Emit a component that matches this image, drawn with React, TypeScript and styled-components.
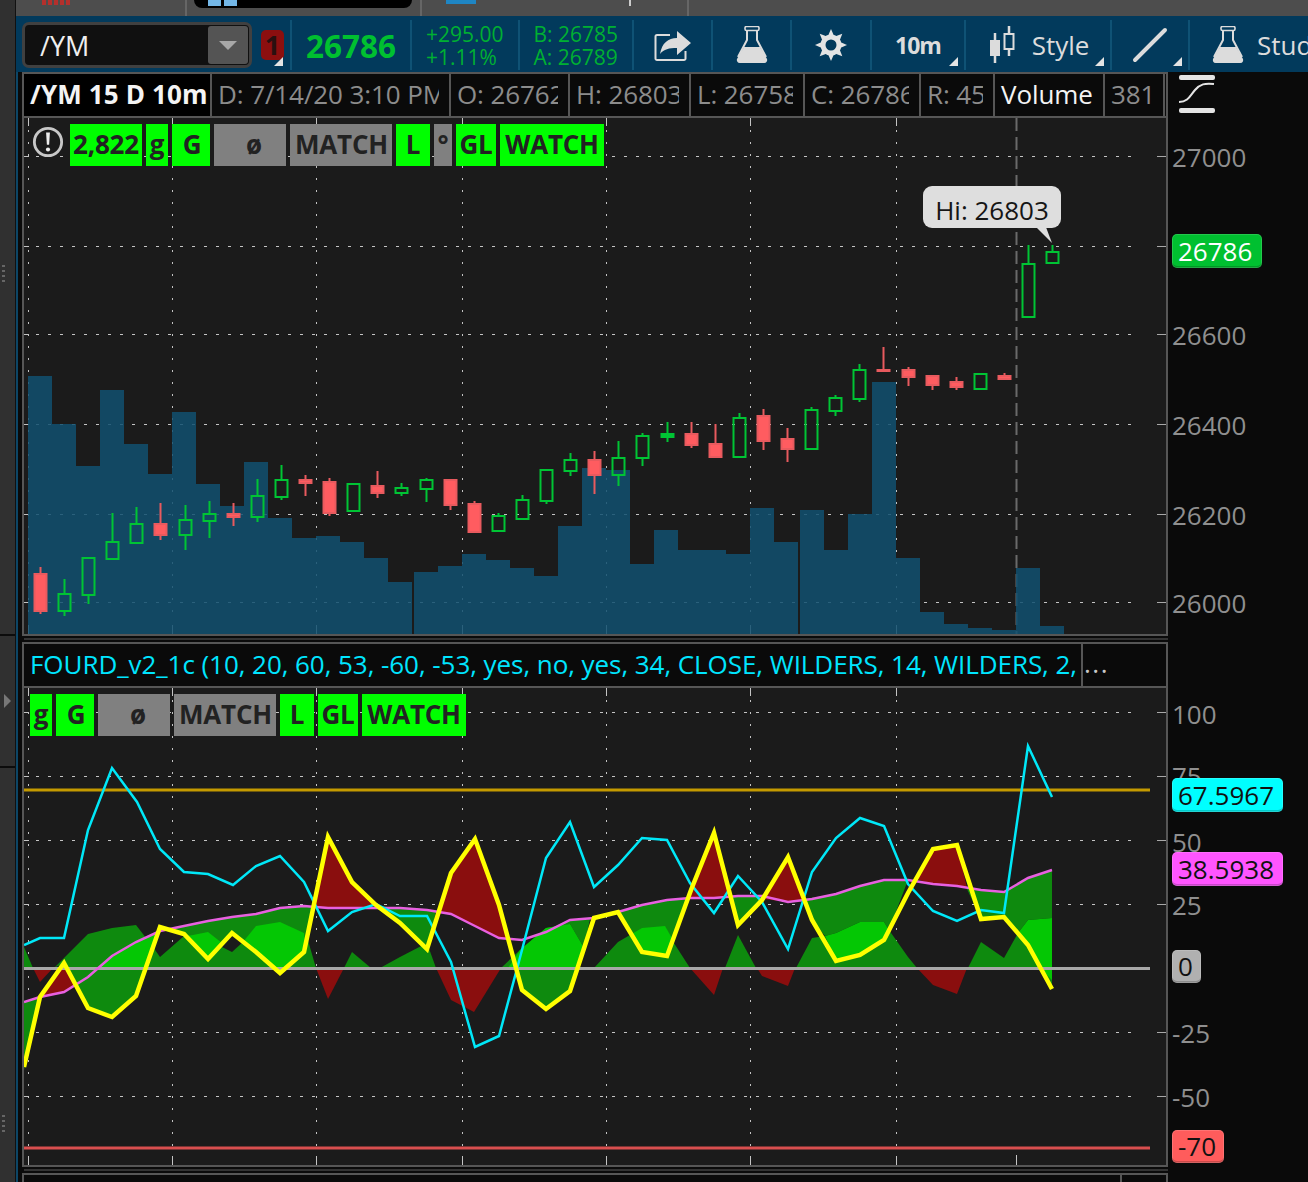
import React from "react";
import styled, { createGlobalStyle } from "styled-components";

const FONT = `"Open Sans", "Noto Sans", sans-serif`;

const GlobalStyle = createGlobalStyle`
  html, body {
    margin: 0;
    padding: 0;
    background: #0a0a0a;
    font-family: ${FONT};
  }
`;

// all chart data is in page pixels, svg viewBoxes are offset to match
const stepX = 24.1;
const candleX = (i: number) => 40.4 + stepX * i;

// [wickTop, wickBottom, bodyTop, bodyBottom, up]
const candles: [number, number, number, number, boolean][] = [
  [567, 614, 574, 611, false], [579, 616, 594, 611, true], [557, 604, 558, 595, true],
  [513, 559, 542, 559, true], [507, 543, 524, 543, true], [503, 540, 524, 535, false],
  [505, 550, 520, 535, true], [501, 538, 514, 521, true], [503, 526, 514, 517, false],
  [479, 522, 496, 517, true], [465, 500, 480, 497, true], [475, 496, 480, 483, false],
  [478, 516, 482, 513, false], [483, 512, 484, 511, true], [471, 498, 486, 493, false],
  [483, 496, 488, 493, true], [478, 502, 480, 489, true], [480, 510, 480, 505, false],
  [501, 532, 504, 532, false], [513, 532, 516, 531, true], [495, 519, 500, 519, true],
  [470, 504, 470, 501, true], [453, 476, 460, 471, true], [451, 494, 460, 475, false],
  [441, 486, 458, 475, true], [433, 466, 436, 458, true], [422, 442, 434, 437, true],
  [422, 448, 434, 445, false], [424, 457, 444, 457, false], [413, 458, 418, 457, true],
  [409, 450, 416, 441, false], [428, 462, 439, 449, false], [407, 450, 410, 449, true],
  [395, 416, 398, 411, true], [364, 402, 370, 399, true], [347, 371, 370, 371, false],
  [367, 386, 370, 377, false], [375, 390, 376, 385, false], [377, 390, 382, 387, false],
  [374, 389, 374, 389, true], [373, 380, 376, 379, false], [245, 318, 264, 317, true],
  [245, 263, 252, 263, true],
];

// [left, right, top]
const volumeBars: [number, number, number][] = [
  [28, 52, 376], [52, 76, 424], [76, 100, 466], [100, 124, 390], [124, 148, 444], [148, 172, 474],
  [172, 196, 412], [196, 220, 484], [220, 244, 506], [244, 268, 462], [268, 292, 518], [292, 316, 538],
  [316, 340, 536], [340, 364, 542], [364, 388, 558], [388, 412, 582], [414, 438, 572], [438, 462, 566],
  [462, 486, 554], [486, 510, 560], [510, 534, 568], [534, 558, 576], [558, 582, 526], [582, 606, 468],
  [606, 630, 470], [630, 654, 564], [654, 678, 530], [678, 702, 550], [702, 726, 550], [726, 750, 554],
  [750, 774, 508], [774, 798, 542], [800, 824, 510], [824, 848, 550], [848, 872, 514], [872, 896, 382],
  [896, 920, 558], [920, 944, 612], [944, 968, 624], [968, 992, 628], [992, 1016, 630], [1016, 1040, 568],
  [1040, 1064, 626],
];

const gridX = [28, 172, 316, 462, 606, 750, 896];

const cyanLine =
  "24,945 40,938 64,938 88,830 112,768 137,802 160,849 184,872 208,874 233,885 256,866 280,856 304,882 328,931 352,912 376,904 400,916 427,916 451,962 475,1047 499,1036 522,950 546,858 570,822 594,887 618,865 642,838 667,840 690,883 714,913 738,876 762,902 788,949 812,872 836,838 860,818 884,826 908,884 933,911 957,921 981,910 1004,913 1028,746 1052,797";
const yellowLine =
  "24,1067 40,997 64,963 88,1008 112,1017 136,996 160,927 184,934 208,959 232,933 256,952 280,973 304,952 328,837 352,882 376,905 400,923 427,949 451,873 475,839 499,905 522,990 546,1009 570,991 594,918 618,912 642,952 667,956 691,890 714,833 738,925 762,900 788,857 812,920 836,961 860,955 884,940 908,893 933,849 957,845 981,919 1004,917 1028,945 1052,989";
const magentaLine =
  "24,1002 40,997 64,992 88,977 112,956 136,942 160,931 184,926 208,921 232,917 256,914 280,908 304,906 328,908 352,908 376,908 400,908 427,910 451,914 475,926 499,938 522,940 546,932 570,920 594,918 618,912 642,905 667,900 690,898 714,898 738,896 762,896 788,902 812,899 836,894 860,886 884,880 908,880 933,884 957,886 981,890 1004,892 1028,878 1052,870";

const darkGreen = [
  "24,947 33,968 24,968",
  "24,1002 41,997 24,1070",
  "54,968 64,958 88,934 112,928 136,925 153,947 136,996 112,1017 88,1008 64,963",
  "165,929 184,926 208,921 232,917 256,914 280,908 304,906 313,907 304,952 280,973 256,952 232,933 208,959 184,934",
  "148,968 153,947 160,957 184,936 208,959 220,946 232,952 243,942 256,952 280,973 304,952 307,937 316,968",
  "344,968 352,952 371,968",
  "376,906 436,911 428,948",
  "380,968 400,957 427,943 436,968",
  "516,968 522,990 546,1009 570,991 577,968",
  "501,968 520,950 546,928 570,924 584,948 577,968",
  "546,930 570,920 590,919 584,948 570,924",
  "594,968 618,942 630,935 642,952 667,956 672,940 690,968",
  "618,912 642,905 667,900 687,899 667,956 642,952",
  "729,896 762,896 763,900 738,925",
  "725,968 738,935 756,968",
  "796,968 812,938 825,936 836,961 860,955 884,940 889,930 908,957 917,968",
  "804,899 836,894 860,886 884,880 908,880 889,930 884,922 860,922 836,933 825,936 812,920",
  "968,968 981,942 1004,958 1018,933 1028,945 1040,968",
  "967,889 981,890 1004,892 1028,878 1052,870 1052,918 1028,920 1018,933 1004,917 981,919",
  "1042,968 1052,968 1052,986",
];
const brightGreen = [
  "98,968 112,956 136,942 158,932 146,968",
  "187,936 193,935 208,932 222,943 208,959",
  "243,942 256,926 280,922 304,933 306,950 304,952 280,973 256,952",
  "508,968 520,950 546,928 570,924 584,948 577,968",
  "630,935 642,928 665,926 673,940 667,956 642,952",
  "825,936 836,933 860,922 884,922 889,930 884,940 860,955 836,961",
  "1018,933 1028,920 1052,918 1052,980 1040,968 1028,945",
];
const darkRed = [
  "33,968 40,982 53,968",
  "41,997 64,963 76,985 64,992",
  "316,968 328,999 344,968",
  "313,907 328,837 352,882 376,906 352,908 328,908",
  "439,912 451,873 475,839 499,905 508,939 499,938 475,926 451,914",
  "436,968 451,1000 474,1012 501,968",
  "690,968 714,995 723,968",
  "688,898 714,833 729,896 714,898",
  "757,968 762,976 788,986 795,968",
  "763,899 788,857 804,899 788,902",
  "917,968 933,985 957,994 967,968",
  "916,879 933,849 957,845 967,888 957,886 933,884",
];

const Page = styled.div`
  width: 1308px;
  height: 1182px;
  display: flex;
  overflow: hidden;
  background: #0a0a0a;
  color: #8c8c8c;
`;

const Rail = styled.div`
  width: 15px;
  flex: none;
  background: #303030;
  border-right: 1px solid #111;
  display: flex;
  flex-direction: column;
`;

const RailSlot = styled.div<{ $h: number }>`
  height: ${(p) => p.$h}px;
  flex: none;
  box-sizing: border-box;
  border-bottom: 2px solid #0c0c0c;
`;

const ArrowSlot = styled(RailSlot)`
  display: flex;
  align-items: center;
  justify-content: center;
  &::after {
    content: "";
    border-top: 7px solid transparent;
    border-bottom: 7px solid transparent;
    border-left: 7px solid #777;
  }
`;

const Grip = styled.div<{ $top: number }>`
  width: 3px;
  height: 20px;
  margin: ${(p) => p.$top}px 0 0 2px;
  background: repeating-linear-gradient(to bottom, #666 0 2px, transparent 2px 5px);
`;

const Main = styled.div`
  flex: 1;
  min-width: 0;
  display: flex;
  flex-direction: column;
`;

const TabStrip = styled.div`
  height: 16px;
  flex: none;
  display: flex;
  background: #4d4d4d;
`;

const Tab = styled.div<{ $w: number }>`
  width: ${(p) => p.$w}px;
  flex: none;
  height: 100%;
  border-right: 2px solid #666;
  display: flex;
  align-items: flex-start;
`;

const ActivePill = styled.div`
  width: 218px;
  height: 8px;
  margin-left: 7px;
  background: #000;
  border-radius: 0 0 8px 8px;
  display: flex;
  gap: 3px;
  padding-left: 14px;
  box-sizing: border-box;
`;

const PillTile = styled.div`
  width: 13px;
  height: 6px;
  background: #74b8e8;
`;

const RedBars = styled.div`
  margin-left: 26px;
  width: 30px;
  height: 5px;
  background: repeating-linear-gradient(to right, #b5302c 0 4px, transparent 4px 6px);
`;

const BlueTile = styled.div`
  width: 30px;
  height: 4px;
  margin-left: 24px;
  background: #1f86c4;
`;

const WhiteTick = styled.div`
  width: 2px;
  height: 6px;
  margin-left: 153px;
  background: #ccc;
`;

const Toolbar = styled.div`
  height: 56px;
  flex: none;
  box-sizing: border-box;
  padding: 4px 0 2px;
  display: flex;
  background: #023a5c;
`;

const Section = styled.div<{ $w?: number }>`
  ${(p) => (p.$w ? `width: ${p.$w}px; flex: none;` : "flex: 1; min-width: 0;")}
  box-sizing: border-box;
  height: 50px;
  position: relative;
  display: flex;
  align-items: center;
  justify-content: center;
  gap: 15px;
  border-right: 2px solid #0f5275;
  & > svg {
    flex: none;
  }
  &:last-child {
    border-right: 0;
    justify-content: flex-start;
    padding-left: 22px;
    gap: 13px;
    white-space: nowrap;
    overflow: hidden;
  }
`;

const StyleSection = styled(Section)`
  padding-left: 2px;
`;

const SymbolSection = styled(Section)`
  justify-content: flex-start;
  gap: 9px;
  padding-left: 6px;
`;

const SymbolBox = styled.div`
  width: 230px;
  height: 46px;
  box-sizing: border-box;
  background: #101010;
  border: 3px solid #404040;
  border-radius: 7px;
  color: #f0f0f0;
  font-size: 27px;
  display: flex;
  align-items: center;
  justify-content: space-between;
  padding: 0 1px 0 15px;
`;

const DropButton = styled.div`
  width: 40px;
  height: 38px;
  background: #545454;
  border-radius: 3px;
  display: flex;
  align-items: center;
  justify-content: center;
  &::after {
    content: "";
    border-left: 9px solid transparent;
    border-right: 9px solid transparent;
    border-top: 9px solid #a8a8a8;
  }
`;

const AlertFlag = styled.div`
  width: 23px;
  height: 30px;
  background: #8c0f0f;
  border-radius: 5px;
  color: #2a1010;
  font-size: 27px;
  font-weight: 700;
  line-height: 30px;
  text-align: center;
`;

const Corner = styled.div<{ $right: number }>`
  position: absolute;
  right: ${(p) => p.$right}px;
  bottom: 4px;
  width: 0;
  height: 0;
  border-left: 9px solid transparent;
  border-bottom: 9px solid #e4e4e4;
`;

const LastPrice = styled.div`
  color: #00c030;
  font-size: 31.5px;
  font-weight: 700;
`;

const QuoteStack = styled.div<{ $w: number }>`
  color: #00b032;
  font-size: 21px;
  line-height: 23px;
  padding-top: 2px;
  white-space: nowrap;
  width: ${(p) => p.$w}px;
`;

const ToolText = styled.span<{ $bold?: boolean }>`
  color: #dcdcdc;
  font-size: ${(p) => (p.$bold ? 23 : 26)}px;
  font-weight: ${(p) => (p.$bold ? 700 : 400)};
  letter-spacing: ${(p) => (p.$bold ? "-1px" : "0")};
`;

const ChartStack = styled.div`
  flex: 1;
  min-height: 0;
  display: flex;
  flex-direction: column;
  box-sizing: border-box;
  border-left: 2px solid #0d4666;
  padding-left: 4px;
`;

const ChartRow = styled.div<{ $h: number }>`
  height: ${(p) => p.$h}px;
  flex: none;
  display: flex;
`;

const PlotFrame = styled.div`
  width: 1146px;
  flex: none;
  box-sizing: border-box;
  border: 2px solid #565656;
  display: flex;
  flex-direction: column;
  overflow: hidden;
`;

const PaneHeader = styled.div`
  height: 44px;
  flex: none;
  box-sizing: border-box;
  display: flex;
  background: #0a0a0a;
  border-bottom: 2px solid #565656;
`;

const Cell = styled.div<{ $w: number; $bright?: boolean; $title?: boolean }>`
  width: ${(p) => p.$w}px;
  flex: none;
  box-sizing: border-box;
  padding: 0 ${(p) => (p.$title ? 0 : 10)}px 0 6px;
  border-right: 2px solid #565656;
  background: ${(p) => (p.$title ? "#000" : "transparent")};
  color: ${(p) => (p.$bright || p.$title ? "#f4f4f4" : "#8c8c8c")};
  font-size: 26px;
  font-weight: ${(p) => (p.$title ? 700 : 400)};
  letter-spacing: ${(p) => (p.$title ? "0.15px" : "-0.1px")};
  line-height: 40px;
  white-space: nowrap;
`;

const CellClip = styled.div`
  overflow: hidden;
  white-space: nowrap;
`;

const StudyTitle = styled.div`
  color: #00e5ff;
  font-size: 26px;
  line-height: 40px;
  white-space: nowrap;
  overflow: hidden;
  margin-right: -8px;
  letter-spacing: -0.06px;
`;

const MoreDots = styled.div`
  color: #c8c8c8;
  font-size: 26px;
  line-height: 38px;
  padding-left: 1px;
  letter-spacing: 1.5px;
`;

const Plot = styled.div`
  flex: 1;
  min-height: 0;
  position: relative;
  background: #1b1b1b;
`;

const ChartSvg = styled.svg`
  display: block;
  width: 100%;
  height: 100%;
`;

const StudyFlags = styled.div<{ $left: number; $top: number }>`
  position: absolute;
  left: ${(p) => p.$left}px;
  top: ${(p) => p.$top}px;
  display: flex;
  align-items: center;
  gap: 4px;
`;

const Flag = styled.div<{ $w: number; $off?: boolean; $start?: boolean; $nudge?: number }>`
  width: ${(p) => p.$w}px;
  height: 42px;
  flex: none;
  box-sizing: border-box;
  background: ${(p) => (p.$off ? "#808080" : "#00ff00")};
  color: #222;
  font-size: 26px;
  font-weight: 700;
  line-height: 40px;
  overflow: hidden;
  white-space: nowrap;
  padding-left: ${(p) => (p.$start ? 5 : p.$nudge ?? 0)}px;
  text-align: ${(p) => (p.$start ? "left" : "center")};
  letter-spacing: -0.2px;
`;

const AlertIcon = styled.svg`
  width: 32px;
  height: 32px;
  margin: 0 2px 6px 0;
  flex: none;
`;

const Tooltip = styled.div`
  position: absolute;
  left: 899px;
  top: 68px;
  width: 138px;
  height: 42px;
  background: #dedede;
  border-radius: 9px;
  color: #151515;
  font-size: 26px;
  line-height: 48px;
  text-align: center;
  &::after {
    content: "";
    position: absolute;
    left: 113px;
    top: 41px;
    width: 16px;
    height: 16px;
    background: #dedede;
    clip-path: polygon(0 0, 62% 0, 100% 100%);
  }
`;

const Axis = styled.div`
  flex: 1;
  position: relative;
  background: #0a0a0a;
  overflow: hidden;
`;

const AxisLabel = styled.div<{ $y: number }>`
  position: absolute;
  left: 4px;
  top: ${(p) => p.$y - 20}px;
  font-size: 26px;
  line-height: 40px;
  color: #8f8f8f;
`;

const AxisBadge = styled.div<{ $y: number; $h: number; $w: number; $bg: string; $light?: boolean }>`
  position: absolute;
  left: 4px;
  top: ${(p) => p.$y}px;
  width: ${(p) => p.$w}px;
  height: ${(p) => p.$h}px;
  padding-left: 6px;
  box-sizing: border-box;
  border-radius: 5px;
  background: ${(p) => p.$bg};
  box-shadow: inset 0 0 0 1px rgba(255, 255, 255, 0.14), inset 0 -2px 0 rgba(0, 0, 0, 0.2);
  color: ${(p) => (p.$light ? "#fff" : "#111")};
  font-size: 26px;
  line-height: ${(p) => p.$h}px;
  white-space: nowrap;
`;

const StudyIcon = styled.svg`
  position: absolute;
  left: 10px;
  top: 3px;
  width: 38px;
  height: 38px;
`;

const PaneGap = styled.div`
  height: 6px;
  flex: none;
  width: 1146px;
  display: flex;
  align-items: center;
  &::after {
    content: "";
    display: block;
    width: 100%;
    height: 2px;
    margin-left: 2px;
    background: #333;
  }
`;

const NextPane = styled.div`
  flex: 1;
  width: 1146px;
  box-sizing: border-box;
  border: 2px solid #565656;
  border-bottom: 0;
  background: #0a0a0a;
  display: flex;
  justify-content: flex-end;
`;

const NextPaneCell = styled.div`
  width: 44px;
  border-left: 2px solid #565656;
`;

const ShareIcon = () => (
  <svg width="38" height="32" viewBox="0 0 38 32" fill="none">
    <path d="M16 6H3a1.5 1.5 0 0 0-1.5 1.5v22A1.5 1.5 0 0 0 3 31h27a1.5 1.5 0 0 0 1.5-1.5V22" stroke="#dcdcdc" strokeWidth="2" />
    <path d="M6 25C8 14 14 9 23 9V2l14 12-14 12v-7c-8 0-13 1-17 6z" fill="#dcdcdc" />
  </svg>
);

const FlaskIcon = () => (
  <svg width="32" height="38" viewBox="0 0 32 38">
    <rect x="9" y="0.5" width="14" height="4" rx="1.5" fill="none" stroke="#dcdcdc" strokeWidth="1.6" />
    <path d="M11 5v9L2 31" fill="none" stroke="#dcdcdc" strokeWidth="2" />
    <path d="M21 5v9l9 17" fill="none" stroke="#dcdcdc" strokeWidth="2" />
    <path d="M8 21h16l7 12c.6 2-.5 4-2.500 4H3.500C1.500 37 .4 35 1 33z" fill="#dcdcdc" />
  </svg>
);

const GearIcon = () => (
  <svg width="32" height="34" viewBox="-16 -17 32 34">
    {[0, 45, 90, 135, 180, 225, 270, 315].map((a) => (
      <path key={a} d="M-3.500 -8 L0 -16 L3.500 -8z" fill="#e4e4e4" transform={`rotate(${a})`} />
    ))}
    <circle r="8" fill="none" stroke="#e4e4e4" strokeWidth="5" />
  </svg>
);

const CandleStyleIcon = () => (
  <svg width="28" height="40" viewBox="0 0 28 40" fill="none">
    <path d="M6 8v30M20 1v30" stroke="#dcdcdc" strokeWidth="2.500" />
    <rect x="1" y="15" width="10" height="16" fill="#dcdcdc" />
    <rect x="15.500" y="9" width="9" height="15" fill="#023a5c" stroke="#dcdcdc" strokeWidth="2" />
  </svg>
);

const LineToolIcon = () => (
  <svg width="36" height="36" viewBox="0 0 36 36">
    <path d="M3 33 33 3" stroke="#dcdcdc" strokeWidth="4" strokeLinecap="round" />
  </svg>
);

const Grid = ({ x0, x1, ys, top, bottom }: { x0: number; x1: number; ys: number[]; top: number; bottom: number }) => (
  <g shapeRendering="crispEdges">
    {ys.map((y) => (
      <g key={y}>
        <line x1={36} x2={x1} y1={y + 0.5} y2={y + 0.5} stroke="#c4c4c4" strokeDasharray="3 9" />
        <line x1={x0} x2={x0 + 5} y1={y + 0.5} y2={y + 0.5} stroke="#c4c4c4" />
        <line x1={1157} x2={1166} y1={y + 0.5} y2={y + 0.5} stroke="#a8a8a8" />
      </g>
    ))}
    {gridX.map((x) => (
      <g key={x}>
        <line x1={x + 0.5} x2={x + 0.5} y1={top + 12} y2={bottom - 12} stroke="#c4c4c4" strokeDasharray="2 10" />
        <line x1={x + 0.5} x2={x + 0.5} y1={top} y2={top + 8} stroke="#c4c4c4" />
        <line x1={x + 0.5} x2={x + 0.5} y1={bottom - 9} y2={bottom} stroke="#c4c4c4" />
      </g>
    ))}
  </g>
);

const PriceChart = () => (
  <ChartSvg viewBox="24 118 1142 516" preserveAspectRatio="none">
    <Grid x0={24} x1={1140} ys={[156, 246, 334, 424, 514, 602]} top={118} bottom={634} />
    <line x1={1016.500} x2={1016.500} y1={118} y2={634} stroke="#6a6a6a" strokeWidth="2" strokeDasharray="13 6" />
    <g fill="#105070" fillOpacity="0.85">
      {volumeBars.map(([l, r, t]) => (
        <rect key={l} x={l} y={t} width={r - l} height={634 - t} />
      ))}
    </g>
    {candles.map(([wt, wb, bt, bb, up], i) => {
      const x = Math.floor(candleX(i)) + 0.5;
      const color = up ? "#00c434" : "#e85a5e";
      const solid = !up || i === 26;
      return (
        <g key={i}>
          <line x1={x} x2={x} y1={wt} y2={bt} stroke={color} strokeWidth="2" />
          <line x1={x} x2={x} y1={bb} y2={wb} stroke={color} strokeWidth="2" />
          <rect
            x={x - 6}
            y={bt}
            width={12}
            height={Math.max(bb - bt, 1)}
            fill={solid ? (up ? color : "#ff5c60") : "none"}
            stroke={color}
            strokeWidth="2"
          />
        </g>
      );
    })}
  </ChartSvg>
);

const StudyChart = () => (
  <ChartSvg viewBox="24 688 1142 477" preserveAspectRatio="none">
    <Grid x0={24} x1={1135} ys={[712, 776, 840, 904, 1032, 1096]} top={688} bottom={1165} />
    <line x1={1016.500} x2={1016.500} y1={1155} y2={1165} stroke="#c4c4c4" />
    <g fill="#0e8a0e">
      {darkGreen.map((pts) => (
        <polygon key={pts} points={pts} />
      ))}
    </g>
    <g fill="#04c704">
      {brightGreen.map((pts) => (
        <polygon key={pts} points={pts} />
      ))}
    </g>
    <g fill="#8a0e0e">
      {darkRed.map((pts) => (
        <polygon key={pts} points={pts} />
      ))}
    </g>
    <line x1={24} x2={1150} y1={790} y2={790} stroke="#c49a00" strokeWidth="3" />
    <line x1={24} x2={1150} y1={968.500} y2={968.500} stroke="#a8a8a8" strokeWidth="3" />
    <line x1={24} x2={1150} y1={1148} y2={1148} stroke="#d94f4f" strokeWidth="3" />
    <polyline points={magentaLine} fill="none" stroke="#e860e0" strokeWidth="2.500" />
    <polyline points={cyanLine} fill="none" stroke="#00e8f8" strokeWidth="2.500" />
    <polyline points={yellowLine} fill="none" stroke="#ffff00" strokeWidth="4.500" />
  </ChartSvg>
);

export default function App() {
  return (
    <Page>
      <GlobalStyle />
      <Rail>
        <RailSlot $h={636}>
          <Grip $top={265} />
        </RailSlot>
        <ArrowSlot $h={132} />
        <Grip $top={347} />
      </Rail>
      <Main>
        <TabStrip>
          <Tab $w={169}>
            <RedBars />
          </Tab>
          <Tab $w={233}>
            <ActivePill>
              <PillTile />
              <PillTile />
            </ActivePill>
          </Tab>
          <Tab $w={265}>
            <BlueTile />
            <WhiteTick />
          </Tab>
        </TabStrip>
        <Toolbar>
          <SymbolSection $w={276}>
            <SymbolBox>
              /YM
              <DropButton />
            </SymbolBox>
            <AlertFlag>1</AlertFlag>
            <Corner $right={7} />
          </SymbolSection>
          <Section $w={120}>
            <LastPrice>26786</LastPrice>
          </Section>
          <Section $w={108}>
            <QuoteStack $w={78}>
              +295.00
              <br />
              +1.11%
            </QuoteStack>
          </Section>
          <Section $w={114}>
            <QuoteStack $w={85}>
              B: 26785
              <br />
              A: 26789
            </QuoteStack>
          </Section>
          <Section $w={79}>
            <ShareIcon />
          </Section>
          <Section $w={79}>
            <FlaskIcon />
          </Section>
          <Section $w={80}>
            <GearIcon />
          </Section>
          <Section $w={94}>
            <ToolText $bold>10m</ToolText>
            <Corner $right={6} />
          </Section>
          <StyleSection $w={146}>
            <CandleStyleIcon />
            <ToolText>Style</ToolText>
            <Corner $right={6} />
          </StyleSection>
          <Section $w={78}>
            <LineToolIcon />
            <Corner $right={6} />
          </Section>
          <Section>
            <FlaskIcon />
            <ToolText>Studies</ToolText>
          </Section>
        </Toolbar>
        <ChartStack>
          <ChartRow $h={564}>
            <PlotFrame>
              <PaneHeader>
                <Cell $w={188} $title>/YM 15 D 10m</Cell>
                <Cell $w={239}><CellClip>D: 7/14/20 3:10 PM</CellClip></Cell>
                <Cell $w={119}><CellClip>O: 26762</CellClip></Cell>
                <Cell $w={121}><CellClip>H: 26803</CellClip></Cell>
                <Cell $w={114}><CellClip>L: 26758</CellClip></Cell>
                <Cell $w={116}><CellClip>C: 26786</CellClip></Cell>
                <Cell $w={74}><CellClip>R: 45</CellClip></Cell>
                <Cell $w={110} $bright>Volume</Cell>
                <Cell $w={60}>381</Cell>
              </PaneHeader>
              <Plot>
                <PriceChart />
                <StudyFlags $left={8} $top={6}>
                  <AlertIcon viewBox="0 0 34 34">
                    <circle cx="17" cy="17" r="14.500" fill="none" stroke="#c8c8c8" strokeWidth="3" />
                    <path d="M15 7h4l-.8 13h-2.400z" fill="#eee" />
                    <circle cx="17" cy="25" r="2.200" fill="#eee" />
                  </AlertIcon>
                  <Flag $w={72}>2,822</Flag>
                  <Flag $w={22}>g</Flag>
                  <Flag $w={38} $nudge={2}>G</Flag>
                  <Flag $w={72} $off $nudge={8}>ø</Flag>
                  <Flag $w={102} $off $start>MATCH</Flag>
                  <Flag $w={34}>L</Flag>
                  <Flag $w={18} $off>°</Flag>
                  <Flag $w={40}>GL</Flag>
                  <Flag $w={104}>WATCH</Flag>
                </StudyFlags>
                <Tooltip>Hi: 26803</Tooltip>
              </Plot>
            </PlotFrame>
            <Axis>
              <StudyIcon viewBox="0 0 38 38">
                <rect x="1" y="0" width="36" height="5" rx="2" fill="#e4e4e4" />
                <rect x="1" y="33" width="36" height="5" rx="2" fill="#e4e4e4" />
                <path d="M1 27C10 27 12 21 17 15 22 9 27 8 36 9" fill="none" stroke="#e4e4e4" strokeWidth="2" />
              </StudyIcon>
              <AxisLabel $y={85}>27000</AxisLabel>
              <AxisBadge $y={162} $h={34} $w={90} $bg="#00c030" $light>26786</AxisBadge>
              <AxisLabel $y={263}>26600</AxisLabel>
              <AxisLabel $y={353}>26400</AxisLabel>
              <AxisLabel $y={443}>26200</AxisLabel>
              <AxisLabel $y={531}>26000</AxisLabel>
            </Axis>
          </ChartRow>
          <PaneGap />
          <ChartRow $h={525}>
            <PlotFrame>
              <PaneHeader>
                <Cell $w={1059}>
                  <StudyTitle>FOURD_v2_1c (10, 20, 60, 53, -60, -53, yes, no, yes, 34, CLOSE, WILDERS, 14, WILDERS, 2,</StudyTitle>
                </Cell>
                <MoreDots>...</MoreDots>
              </PaneHeader>
              <Plot>
                <StudyChart />
                <StudyFlags $left={6} $top={6}>
                  <Flag $w={22}>g</Flag>
                  <Flag $w={38} $nudge={2}>G</Flag>
                  <Flag $w={72} $off $nudge={8}>ø</Flag>
                  <Flag $w={102} $off $start>MATCH</Flag>
                  <Flag $w={34}>L</Flag>
                  <Flag $w={40}>GL</Flag>
                  <Flag $w={104}>WATCH</Flag>
                </StudyFlags>
              </Plot>
            </PlotFrame>
            <Axis>
              <AxisLabel $y={72}>100</AxisLabel>
              <AxisLabel $y={134}>75</AxisLabel>
              <AxisLabel $y={200}>50</AxisLabel>
              <AxisLabel $y={263}>25</AxisLabel>
              <AxisLabel $y={391}>-25</AxisLabel>
              <AxisLabel $y={455}>-50</AxisLabel>
              <AxisBadge $y={136} $h={34} $w={111} $bg="#00ffff">67.5967</AxisBadge>
              <AxisBadge $y={210} $h={34} $w={111} $bg="#ff55ff">38.5938</AxisBadge>
              <AxisBadge $y={308} $h={33} $w={29} $bg="#b0b0b0">0</AxisBadge>
              <AxisBadge $y={488} $h={33} $w={52} $bg="#ff5c5c">-70</AxisBadge>
            </Axis>
          </ChartRow>
          <PaneGap />
          <NextPane>
            <NextPaneCell />
          </NextPane>
        </ChartStack>
      </Main>
    </Page>
  );
}
